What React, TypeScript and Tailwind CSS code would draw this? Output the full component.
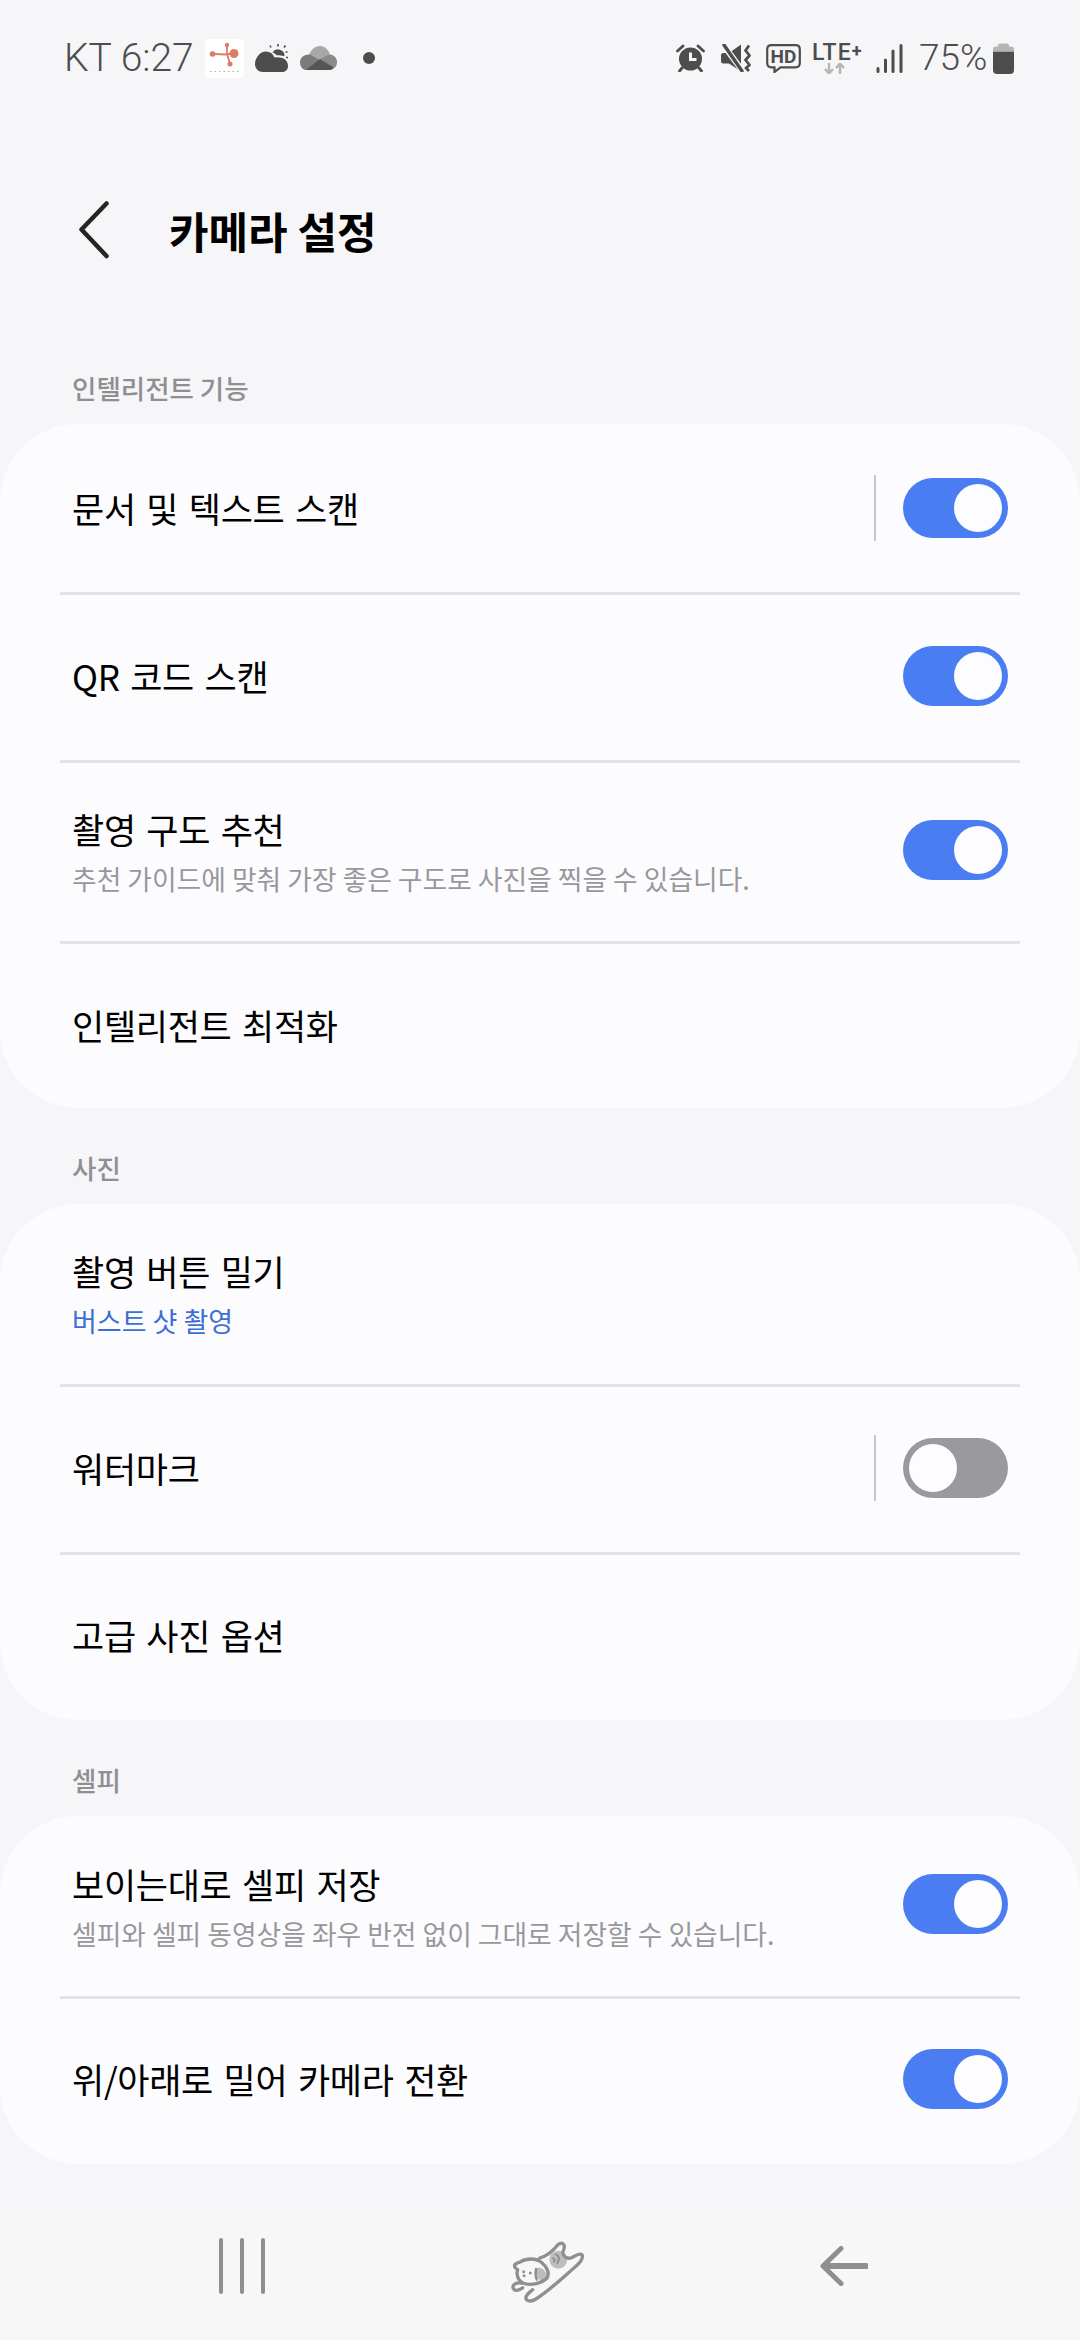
import React from "react";

const KR = "font-['Noto_Sans_CJK_KR','Noto_Sans',sans-serif]";

function Toggle({ on = true, divider = false }: { on?: boolean; divider?: boolean }) {
  return (
    <div className="flex items-center">
      {divider && <div className="w-[2px] h-[66px] bg-[#c6c6c8] mr-[27px]" />}
      <div
        className={
          on
            ? "w-[105px] h-[60px] rounded-full bg-[#4a7cf2] flex items-center justify-end pr-[6px]"
            : "w-[105px] h-[60px] rounded-full bg-[#9a999e] flex items-center justify-start pl-[6px]"
        }
      >
        <div className="w-[48px] h-[48px] rounded-full bg-[#fdfdff]" />
      </div>
    </div>
  );
}

function Row({
  h,
  title,
  sub,
  link,
  toggle,
  textCls = "",
}: {
  h: string;
  title: string;
  sub?: string;
  link?: string;
  toggle?: React.ReactNode;
  textCls?: string;
}) {
  return (
    <div className={`${h} flex items-center justify-between pl-[72px] pr-[72px]`}>
      <div className={`flex flex-col ${textCls}`}>
        <div className="text-[35px] leading-[48px] text-black tracking-[-0.3px] [word-spacing:3px]">{title}</div>
        {sub && <div className="text-[26.8px] leading-[36px] mt-[8px] text-[#98989c]">{sub}</div>}
        {link && <div className="text-[27px] leading-[36px] mt-[8px] text-[#3e6fd2]">{link}</div>}
      </div>
      {toggle}
    </div>
  );
}

const Sep = () => <div className="h-[3px] mx-[60px] bg-[#e3e3e6]" />;

function Label({ children, h }: { children: string; h: string }) {
  return (
    <div className={`${h} flex items-end pl-[72px] pb-[17px] text-[26.5px] leading-[38px] font-medium text-[#8e8e93]`}>
      {children}
    </div>
  );
}

const Card = ({ children }: { children: React.ReactNode }) => (
  <div className="bg-[#fcfcff] rounded-[78px]">{children}</div>
);

function AppIcon() {
  return (
    <svg width="39" height="39" viewBox="0 0 39 39" className="rounded-[4px]">
      <rect width="39" height="39" rx="4" fill="#fff" />
      <g stroke="#d97d68" strokeWidth="1.8" fill="none">
        <path d="M8 15L21 15.5M22 6L22 15M21 15.5L29 14M22 15L25 25" />
      </g>
      <g fill="#d97d68">
        <circle cx="29" cy="14.5" r="4.5" />
        <circle cx="22" cy="6" r="2.2" />
        <circle cx="7.5" cy="15" r="2.8" />
        <circle cx="25" cy="25" r="2.5" />
      </g>
      <path d="M5 32.5H34" stroke="#d9a093" strokeWidth="1" strokeDasharray="1.5 3" />
    </svg>
  );
}

function Weather() {
  return (
    <svg width="33" height="28" viewBox="0 0 33 28">
      <path d="M8 28C3.5 28 0 24.5 0 20C0 14 5 7.5 11 7.5C15 7.5 18 9.5 19.5 13.5C23 13 28 13.5 30 15.5C32 17 33 19.5 33 22C33 26 30 28 27 28Z" fill="#4d4d4d" />
      <path d="M17.5 8.5A6.5 6.5 0 0 1 29.5 12.2C27 11.5 24 11.2 21.5 11.2C20.5 10 19 9 17.5 8.5Z" fill="#4d4d4d" />
      <path d="M15 1.5L16 3.5M23 0V2.5M30.5 1.5L29 3.5M32.5 8H30.5M33 13.5H31" stroke="#4d4d4d" strokeWidth="1.6" />
    </svg>
  );
}

function OneCloud() {
  return (
    <svg width="37" height="24" viewBox="0 0 37 24">
      <path d="M9 9C11 3 16 0 20 0C25 0 29 4 30 9L20 14Z" fill="#a8a8a8" />
      <path d="M6 24C2 24 0 20 0 16C0 11 5 8 10 8.5L20 14L9 24Z" fill="#7b7b7b" />
      <path d="M20 13L29 8.5C33 8 37 11.5 37 16C37 19 36 21 34 22Z" fill="#8a8a8a" />
      <path d="M6 24L20 13L34 21.5C33 23 32 24 30 24Z" fill="#555" />
    </svg>
  );
}

function Alarm() {
  return (
    <svg width="29" height="28" viewBox="0 0 29 28">
      <circle cx="14.5" cy="15" r="11.5" fill="#4d4d4d" />
      <path d="M14.5 8.5V15.5H20.5" stroke="#f6f6f8" strokeWidth="3" fill="none" />
      <path d="M1.5 7L7 2M27.5 7L22 2M6 24L3.5 27M23 24L25.5 27" stroke="#4d4d4d" strokeWidth="2.8" strokeLinecap="round" />
    </svg>
  );
}

function Mute() {
  return (
    <svg width="30" height="28" viewBox="0 0 30 28">
      <path d="M2.5 9H8L20 0.5V27.5L8 19.5H2.5Q0 19.5 0 17V11.5Q0 9 2.5 9Z" fill="#4d4d4d" />
      <path d="M1 -1L23 29" stroke="#f6f6f8" strokeWidth="6" />
      <path d="M3 1L21 27" stroke="#4d4d4d" strokeWidth="3.4" strokeLinecap="round" />
      <path d="M28 1.5L24.5 6.5L28.5 11.5L24.5 16L28.5 21L25 24L28 27" stroke="#4d4d4d" strokeWidth="2.8" fill="none" strokeLinejoin="round" />
    </svg>
  );
}

function HdIcon() {
  return (
    <svg width="35" height="29" viewBox="0 0 35 29">
      <path d="M5.5 1.2H29.5Q33.8 1.2 33.8 5.5V19Q33.8 23.3 29.5 23.3H14.5L8.5 28V23.3H5.5Q1.2 23.3 1.2 19V5.5Q1.2 1.2 5.5 1.2Z" fill="none" stroke="#4d4d4d" strokeWidth="2.2" />
      <text x="17.5" y="19" textAnchor="middle" fontFamily="Roboto, sans-serif" fontWeight="700" fontSize="19" fill="#4d4d4d">HD</text>
    </svg>
  );
}

function Lte() {
  return (
    <div className="w-[53px] h-[31px] flex flex-col items-center">
      <div className="h-[19px] w-full text-[23px] leading-[19px] font-medium text-[#4d4d4d] font-['Roboto',sans-serif] whitespace-nowrap tracking-[1px]">
        LTE<span className="text-[18px] font-bold relative top-[-3px]">+</span>
      </div>
      <svg width="21" height="11" viewBox="0 0 21 11" className="mt-[1px] mr-[9px]">
        <path d="M5 0V10M1 6L5 10.5L9 6M16 11V1M12 5L16 .5L20 5" stroke="#b5b5b5" strokeWidth="2.4" fill="none" />
      </svg>
    </div>
  );
}

function Signal() {
  return (
    <svg width="27" height="29" viewBox="0 0 27 29">
      <path d="M2 24.5V27.5M9.5 16V27.5M17 7V27.5M25 1.5V27.5" stroke="#4d4d4d" strokeWidth="3" strokeLinecap="round" />
    </svg>
  );
}

function Battery() {
  return (
    <svg width="21" height="31" viewBox="0 0 21 31">
      <path d="M5 5V2.5Q5 0.5 7 0.5H14Q16 0.5 16 2.5V5Z" fill="#b5b5b5" />
      <path d="M0 8V6.5Q0 3.5 3 3.5H18Q21 3.5 21 6.5V8Z" fill="#b5b5b5" />
      <path d="M0 8.5H21V27Q21 31 17 31H4Q0 31 0 27Z" fill="#4d4d4d" />
    </svg>
  );
}

function Dog() {
  return (
    <svg width="140" height="90" viewBox="0 0 420 270">
      <circle cx="232" cy="110" r="27" fill="#bdbdbd" />
      <path d="M165 138C180 125 200 148 198 165C185 176 167 172 165 155Z" fill="#bdbdbd" />
      <g fill="none" stroke="#8f8f8f" strokeWidth="10" strokeLinecap="round" strokeLinejoin="round">
        <path d="M118 117C135 105 165 105 180 117C197 130 207 150 198 165C183 180 150 190 125 180C108 170 106 150 110 140C100 135 98 127 104 123C108 119 114 118 118 117Z" />
        <path d="M122 180C105 178 92 185 97 197C103 207 118 200 125 194" />
        <path d="M176 105C197 100 216 84 232 64C245 55 256 66 246 85C243 100 258 108 270 105C280 100 295 88 303 95C308 105 298 118 285 130C255 155 215 195 165 228C150 238 132 235 135 222C138 212 150 205 155 200" />
        <path d="M225 94C236 100 236 110 229 120M216 106C221 108 222 112 219 116" strokeWidth="6" />
        <path d="M165 138C163 148 163 160 167 170" strokeWidth="7" />
      </g>
      <g fill="#8f8f8f">
        <circle cx="128" cy="146" r="4.5" />
        <circle cx="129" cy="158" r="4.5" />
        <circle cx="148" cy="150" r="4.5" />
      </g>
    </svg>
  );
}

export default function App() {
  return (
    <div className={`${KR} w-[1080px] h-[2340px] bg-[#f6f6f8] flex flex-col overflow-hidden`}>
      {/* status bar */}
      <div className="h-[116px] flex items-center justify-between pl-[64px] pr-[66px] text-[#4d4d4d] font-['Roboto',sans-serif] font-light">
        <div className="flex items-center">
          <div className="w-[141px] text-[39px] leading-[44px] whitespace-nowrap">KT 6:27</div>
          <AppIcon />
          <div className="ml-[11px]"><Weather /></div>
          <div className="ml-[12px]"><OneCloud /></div>
          <div className="ml-[26px] w-[12px] h-[12px] rounded-full bg-[#4d4d4d]" />
        </div>
        <div className="flex items-center">
          <Alarm />
          <div className="ml-[16px]"><Mute /></div>
          <div className="ml-[15px]"><HdIcon /></div>
          <div className="ml-[11px]"><Lte /></div>
          <div className="ml-[11px]"><Signal /></div>
          <div className="ml-[16px] w-[74px] text-[37px] leading-[44px] whitespace-nowrap">75%</div>
          <Battery />
        </div>
      </div>

      {/* header */}
      <div className="h-[236px] flex items-center pl-[79px] pb-[8px]">
        <svg width="30" height="58" viewBox="0 0 30 58" className="mr-[60px]">
          <path d="M27.5 2.5L2.5 28.5L27.5 55" fill="none" stroke="#252525" strokeWidth="4.5" strokeLinecap="round" strokeLinejoin="round" />
        </svg>
        <div className="text-[43px] leading-[56px] font-bold text-black">카메라 설정</div>
      </div>

      <div className="h-[72px] flex items-center pl-[72px] text-[26.5px] leading-[38px] font-medium text-[#8e8e93]">
        인텔리전트 기능
      </div>
      <Card>
        <Row h="h-[168px]" title="문서 및 텍스트 스캔" toggle={<Toggle divider />} />
        <Sep />
        <Row h="h-[165px] pb-[4px]" title="QR 코드 스캔" toggle={<Toggle />} />
        <Sep />
        <Row h="h-[178px] pb-[5px]" title="촬영 구도 추천" sub="추천 가이드에 맞춰 가장 좋은 구도로 사진을 찍을 수 있습니다." textCls="pt-[2px]" toggle={<Toggle />} />
        <Sep />
        <Row h="h-[164px]" title="인텔리전트 최적화" textCls="pb-[2px]" />
      </Card>

      <Label h="h-[96px]">사진</Label>
      <Card>
        <Row h="h-[180px]" title="촬영 버튼 밀기" link="버스트 샷 촬영" textCls="pb-[2px]" />
        <Sep />
        <Row h="h-[165px] pb-[3px]" title="워터마크" toggle={<Toggle on={false} divider />} />
        <Sep />
        <Row h="h-[165px] pb-[5px]" title="고급 사진 옵션" />
      </Card>

      <Label h="h-[96px]">셀피</Label>
      <Card>
        <Row h="h-[180px] pb-[4px]" title="보이는대로 셀피 저장" sub="셀피와 셀피 동영상을 좌우 반전 없이 그대로 저장할 수 있습니다." textCls="pt-[4px]" toggle={<Toggle />} />
        <Sep />
        <Row h="h-[165px] pb-[5px]" title="위/아래로 밀어 카메라 전환" toggle={<Toggle />} />
      </Card>

      <div className="flex-1" />

      {/* nav bar */}
      <div className="h-[132px] bg-[#f7f7f7] flex items-center pb-[16px]">
        <div className="ml-[219px] flex gap-[17px]">
          <div className="w-[4px] h-[56px] rounded-full bg-[#8f8f8f]" />
          <div className="w-[4px] h-[56px] rounded-full bg-[#8f8f8f]" />
          <div className="w-[4px] h-[56px] rounded-full bg-[#8f8f8f]" />
        </div>
        <div className="ml-[216px] mt-[4px]"><Dog /></div>
        <svg width="48" height="40" viewBox="0 0 48 40" className="ml-[199px]">
          <path d="M21 2.5L3 20L21 37.5" fill="none" stroke="#8f8f8f" strokeWidth="5" strokeLinecap="round" strokeLinejoin="round" />
          <path d="M6 20H46" stroke="#8f8f8f" strokeWidth="6" strokeLinecap="round" />
        </svg>
      </div>
    </div>
  );
}
